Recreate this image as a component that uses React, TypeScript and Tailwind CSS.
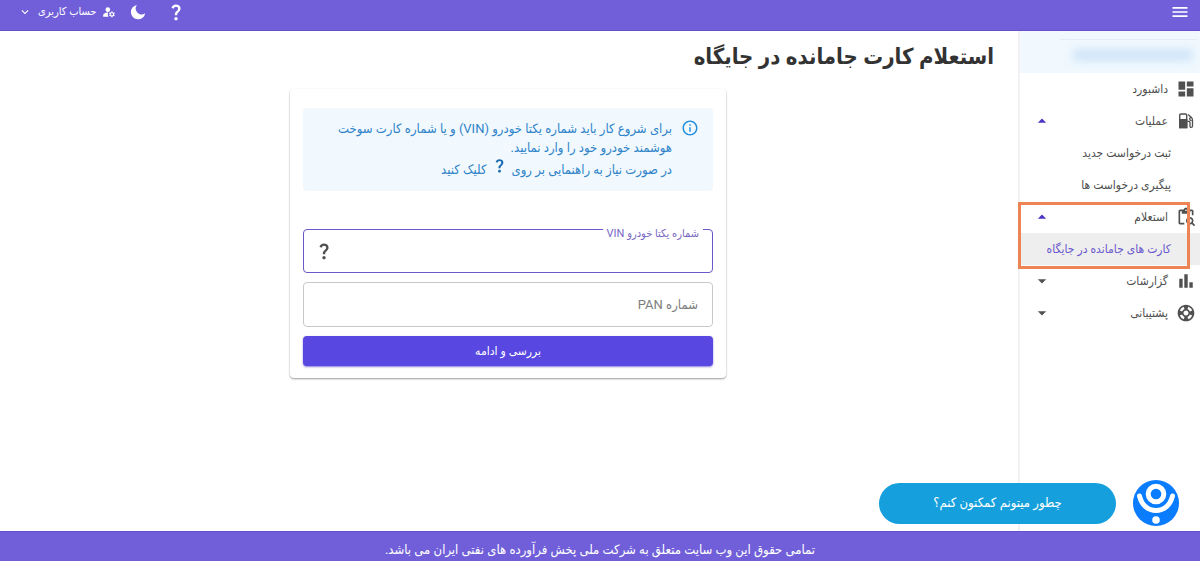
import { useState } from 'react';
import type { ReactNode } from 'react';
import {
  MdArrowDropDown,
  MdArrowDropUp,
  MdContentPasteSearch,
  MdDashboard,
  MdInfoOutline,
  MdKeyboardArrowDown,
  MdManageAccounts,
  MdMenu,
  MdQuestionMark,
  MdSupport,
} from 'react-icons/md';

function MoonIcon() {
  return (
    <svg viewBox="0 0 16 16" className="size-4" fill="currentColor" aria-hidden="true">
      <path d="M6.9 1A7.2 7.2 0 1 0 15.2 9.2 5.9 5.9 0 0 1 6.9 1z" />
    </svg>
  );
}

function FuelIcon() {
  return (
    <svg viewBox="0 0 16 16" className="size-4" fill="none" stroke="currentColor" aria-hidden="true">
      <path d="M1.7 14.6V2.4Q1.7 1 3.1 1h4.2q1.4 0 1.4 1.4v12.2z" strokeWidth="1.4" />
      <path d="M1.7 6.6h7v8h-7z" fill="currentColor" strokeWidth="1.4" />
      <path d="M10 1.5l3.2 2.7q1.3 1.1 1.3 2.7v6q0 1.5-1.3 1.5T12 12.9V9.6q0-1.3-1.3-1.3H9.4M13.6 7.7q-1.9 0-1.9-1.7t1.7-1.7" strokeWidth="1.3" />
    </svg>
  );
}

function BarsIcon() {
  return (
    <svg viewBox="0 0 16 16" className="size-[18px]" fill="currentColor" aria-hidden="true">
      <path d="M2 6h3v8H2zM6.5 2h3v12h-3zM11 9h3v5h-3z" />
    </svg>
  );
}

function AssistantLogo() {
  return (
    <svg viewBox="0 0 46 46" className="size-[46px]" fill="none" aria-hidden="true">
      <circle cx="23" cy="23" r="23" fill="#0a7cff" />
      <circle cx="23" cy="14" r="7.8" stroke="#fff" strokeWidth="5" />
      <path d="M6.5 16C8.5 25 15 30.500 23 30.500s14.500-5.500 16.500-14.500" stroke="#fff" strokeWidth="5" strokeLinecap="round" />
      <circle cx="23" cy="40" r="3.8" fill="#fff" />
    </svg>
  );
}

type GroupProps = {
  icon: ReactNode;
  label: string;
  open?: boolean;
  onToggle?: () => void;
  children?: ReactNode;
};

function NavGroup({ icon, label, open, onToggle, children }: GroupProps) {
  return (
    <li>
      <button type="button" onClick={onToggle} aria-expanded={open} className="flex h-8 w-full items-center ps-1 pe-3">
        <span className="flex w-7 shrink-0">
          <span className="flex w-5 justify-center">{icon}</span>
        </span>
        <span className="grow text-start">{label}</span>
        {open ? <MdArrowDropUp className="size-5 text-[#4a35c4]" /> : <MdArrowDropDown className="size-5" />}
      </button>
      {open && <ul>{children}</ul>}
    </li>
  );
}

function NavLink({ label, active }: { label: string; active?: boolean }) {
  return (
    <li>
      <a
        href="#"
        className={
          active
            ? 'flex h-8 items-center bg-[#eeeeee] ps-[29px] text-[#6a58cc]'
            : 'flex h-8 items-center ps-[29px]'
        }
      >
        {label}
      </a>
    </li>
  );
}

export default function App() {
  const [open, setOpen] = useState({ operations: true, inquiry: true, reports: false, support: false });
  const toggle = (key: keyof typeof open) => setOpen({ ...open, [key]: !open[key] });

  return (
    <div
      dir="rtl"
      lang="fa"
      className="relative flex min-h-screen flex-col bg-white font-[Roboto,'DejaVu_Sans_Condensed','DejaVu_Sans',sans-serif] text-xs text-[#505050]"
    >
      <header className="flex h-[31px] items-start justify-between border-b border-[#6450cc] bg-[#715fd9] px-[10px] text-white">
        <button type="button" aria-label="منو" className="flex h-6 items-center">
          <MdMenu className="size-5" />
        </button>
        <div className="flex h-6 items-center pe-2">
          <button type="button" aria-label="راهنما" className="me-5">
            <MdQuestionMark className="size-5" />
          </button>
          <button type="button" aria-label="حالت شب" className="me-[14px]">
            <MoonIcon />
          </button>
          <button type="button" className="flex items-center text-[11px]">
            <MdManageAccounts className="me-[6px] size-[14px]" />
            <span>حساب کاربری</span>
            <MdKeyboardArrowDown className="ms-[6px] size-[14px]" />
          </button>
        </div>
      </header>

      <div className="flex grow">
        <aside className="relative w-[182px] shrink-0 border-e-2 border-[#f1f1f3]">
          <div className="h-[42px] bg-[#f1f9fe] pt-2">
            <div className="me-[40px] ms-[3px] h-7 border-t border-[#e3edf8]">
              <div className="ms-1 mt-[9px] h-3 w-[120px] bg-[#cfe4f8] blur-[5px]" />
            </div>
          </div>
          <nav>
            <ul>
              <li>
                <a href="#" className="flex h-8 items-center ps-1">
                  <span className="flex w-7 shrink-0">
                    <MdDashboard className="size-5" />
                  </span>
                  داشبورد
                </a>
              </li>
              <NavGroup icon={<FuelIcon />} label="عملیات" open={open.operations} onToggle={() => toggle('operations')}>
                <NavLink label="ثبت درخواست جدید" />
                <NavLink label="پیگیری درخواست ها" />
              </NavGroup>
              <NavGroup
                icon={<MdContentPasteSearch className="size-5" />}
                label="استعلام"
                open={open.inquiry}
                onToggle={() => toggle('inquiry')}
              >
                <NavLink label="کارت های جامانده در جایگاه" active />
              </NavGroup>
              <NavGroup icon={<BarsIcon />} label="گزارشات" open={open.reports} onToggle={() => toggle('reports')} />
              <NavGroup
                icon={<MdSupport className="size-5" />}
                label="پشتیبانی"
                open={open.support}
                onToggle={() => toggle('support')}
              />
            </ul>
          </nav>
          <div className="pointer-events-none absolute top-[171px] right-[10px] -left-[2px] h-[67px] border-3 border-[#ee8353]" />
        </aside>

        <main className="grow ps-6 pe-[22px] pt-2">
          <h1 className="text-[22px] leading-9 font-bold text-[#333333]">استعلام کارت جامانده در جایگاه</h1>
          <form
            onSubmit={(e) => e.preventDefault()}
            className="mx-auto mt-[14px] w-full max-w-[436px] rounded bg-white px-[13px] pt-[19px] pb-3 shadow-[0_1px_2px_rgba(0,0,0,0.4)]"
          >
            <div className="flex rounded bg-[#f1f9fe] px-[14px] pt-[11px] pb-3 text-[13px] leading-[19px] text-[#2f83c9]">
              <MdInfoOutline className="me-[9px] size-[18px] shrink-0 text-[#2490df]" />
              <p>
                برای شروع کار باید شماره یکتا خودرو (VIN) و یا شماره کارت سوخت
                <br />
                هوشمند خودرو خود را وارد نمایید.
                <br />
                در صورت نیاز به راهنمایی بر روی
                <MdQuestionMark className="mx-1 inline size-[17px] align-baseline text-[#1768b3]" />
                کلیک کنید
              </p>
            </div>

            <div className="relative mt-[38px] flex h-11 items-center rounded border border-[#6a58c8]">
              <label htmlFor="vin" className="absolute -top-1 right-[9px] bg-white px-1 text-[11px] leading-4 text-[#7767c4]">
                شماره یکتا خودرو VIN
              </label>
              <input id="vin" type="text" className="h-full min-w-0 grow px-3 text-sm outline-none" />
              <button type="button" aria-label="راهنمای VIN" className="me-[10px]">
                <MdQuestionMark className="size-5" />
              </button>
            </div>

            <input
              type="text"
              aria-label="شماره PAN"
              placeholder="شماره PAN"
              className="mt-[9px] h-[45px] w-full rounded border border-[#c8c8c8] px-[14px] text-[13px] outline-none placeholder:text-[#7d7d7d]"
            />
            <button
              type="submit"
              className="mt-[9px] h-[30px] w-full rounded bg-[#5847e0] text-xs text-white shadow-[0_1px_2px_rgba(60,40,190,0.6)]"
            >
              بررسی و ادامه
            </button>
          </form>
        </main>
      </div>

      <div className="absolute right-[21px] bottom-[35px] flex items-center gap-[17px]">
        <AssistantLogo />
        <button type="button" className="h-[41px] w-[237px] rounded-full bg-[#159fdc] text-[13px] text-white">
          چطور میتونم کمکتون کنم؟
        </button>
      </div>

      <footer className="flex h-[30px] items-center justify-center border-t border-[#6450cc] bg-[#715fd9] pt-[6px] text-[13px] text-white">
        تمامی حقوق این وب سایت متعلق به شرکت ملی پخش فرآورده های نفتی ایران می باشد.
      </footer>
    </div>
  );
}
